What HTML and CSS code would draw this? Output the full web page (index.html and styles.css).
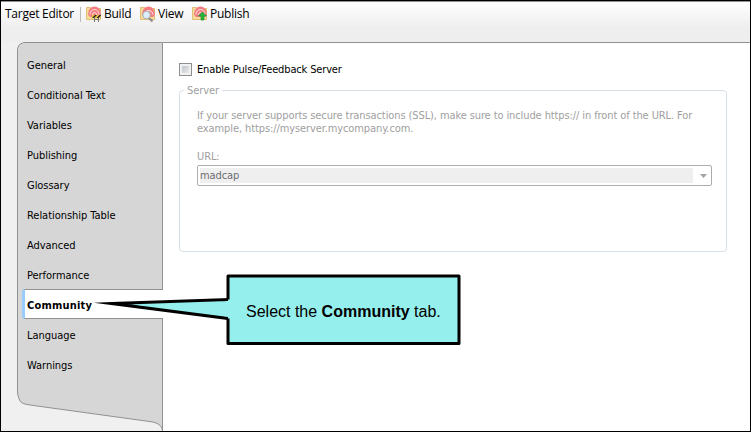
FILE: index.html
```html
<!DOCTYPE html>
<html lang="en">
<head>
<meta charset="utf-8">
<title>Target Editor</title>
<link rel="stylesheet" href="styles.css">
</head>
<body>
<div class="window">
  <header class="toolbar">
    <span class="title">Target Editor</span>
    <span class="divider"></span>
    <button class="tool build"><svg width="16" height="17" viewBox="0 0 16 17"><path d="M.5 1.500h4l1 1h9v11H.5z" fill="#f5dc98" stroke="#e0bd78"/><path d="M2 8.500a6.500 8 0 0 1 13 0L13 11H4z" fill="#f47c80"/><path d="M4 8.500a4.500 5 0 0 1 9 0M6.500 9a2 2.500 0 0 1 4 0" fill="none" stroke="#ffe6e2"/><path d="M6 9h9v3H6z" fill="#e8c23c"/><path d="M6 12l3-3h2l-3 3zM10.500 12l3-3H15v.5L12.500 12z" fill="#222"/><path d="M8.500 12v4M12.500 12v4M8 13.500h5" stroke="#777" fill="none"/></svg><span>Build</span></button>
    <button class="tool view"><svg width="16" height="17" viewBox="0 0 16 17"><path d="M.5 1.500h4l1 1h9v11H.5z" fill="#f5dc98" stroke="#e0bd78"/><path d="M2 8.500a6.500 8 0 0 1 13 0L13 11H4z" fill="#f47c80"/><path d="M5 6a4.500 4 0 0 1 8 2.500" fill="none" stroke="#ffe6e2"/><path d="M9 12l3.500 3.500" stroke="#888" stroke-width="2"/><circle cx="6.500" cy="9" r="3.800" fill="#dcecf8" stroke="#a9adb5"/></svg><span>View</span></button>
    <button class="tool publish"><svg width="16" height="17" viewBox="0 0 16 17"><path d="M.5 1.500h4l1 1h9v11H.5z" fill="#f5dc98" stroke="#e0bd78"/><path d="M2 8.500a6.500 8 0 0 1 13 0L13 11H4z" fill="#f47c80"/><path d="M4 8.500a4.500 5 0 0 1 9 0M6.500 9a2 2.500 0 0 1 4 0" fill="none" stroke="#ffe6e2"/><path d="M10.500 6l4 4H12v4H9v-4H6.500z" fill="#27b53a" stroke="#14862a" stroke-width=".6"/></svg><span>Publish</span></button>
  </header>
  <div class="body">
    <nav class="tabs">
      <svg class="tabs-shape" width="147" height="390" viewBox="0 0 147 390"><path d="M.5 350V6.500L2.500 2.500L6.500.5H145.500V389Q145 382 136 380L13 363Q4 362 2.500 358Q.5 353 .5 350z" fill="#d6d6d6" stroke="#919191"/></svg>
      <a class="tab">General</a>
      <a class="tab">Conditional Text</a>
      <a class="tab">Variables</a>
      <a class="tab">Publishing</a>
      <a class="tab">Glossary</a>
      <a class="tab">Relationship Table</a>
      <a class="tab">Advanced</a>
      <a class="tab">Performance</a>
      <a class="tab active">Community</a>
      <a class="tab">Language</a>
      <a class="tab">Warnings</a>
    </nav>
    <main class="page">
      <label class="enable"><span class="check"></span><span class="enable-text">Enable Pulse/Feedback Server</span></label>
      <fieldset class="group">
        <legend><span>Server</span></legend>
        <p class="hint">If your server supports secure transactions (SSL), make sure to include https:// in front of the URL. For<br>example, https://myserver.mycompany.com.</p>
        <div class="url-label">URL:</div>
        <div class="combo"><div class="value">madcap</div><svg width="7" height="4" viewBox="0 0 7 4"><path d="M0 0h7L3.500 4z" fill="#a3a3a3"/></svg></div>
      </fieldset>
    </main>
  </div>
  <div class="callout">
    <svg width="374" height="74" viewBox="0 0 374 74"><path d="M23 30.500L139 26.500V45.500z" fill="#95efec" stroke="#000" stroke-width="3" stroke-miterlimit="30"/><path d="M139 26.500V3H370V70.500H139V45.500" fill="#95efec" stroke="#000" stroke-width="3" stroke-linejoin="round"/><path d="M136 28.100V43.600L142 44.500V27.900z" fill="#95efec"/></svg>
    <span class="callout-text">Select the <b>Community</b> tab.</span>
  </div>
</div>
</body>
</html>
```
FILE: styles.css
```css
* { box-sizing: border-box; }
body { margin: 0; font: 11px/13px "DejaVu Sans Condensed", "Noto Sans", sans-serif; color: #000; }
.window { position: relative; width: 751px; height: 432px; border: 1px solid #000; background: #f0f0f0; overflow: hidden; display: flex; flex-direction: column; }
.toolbar { height: 41px; flex: none; display: flex; align-items: flex-start; padding-left: 4px; border-top: 1px solid #919191; background: linear-gradient(#fff, #eee 26px, #eee); font: 12px/16px "Open Sans", sans-serif; white-space: nowrap; }
.toolbar span { margin-top: 4px; }
.title { width: 76px; letter-spacing: -.25px; }
.toolbar .divider { width: 1px; height: 15px; margin: 5px 5px 0 -1px; background: #bbb; }
.tool { display: flex; gap: 2px; border: 0; padding: 0; background: none; font: inherit; color: inherit; letter-spacing: -.25px; }
.tool svg { margin-top: 4px; }
.build { width: 54px; }
.view { width: 52px; }
.body { flex: 1; display: flex; padding-left: 16px; min-height: 0; }
.tabs { position: relative; width: 146px; flex: none; padding-top: 8px; letter-spacing: -.04px; }
.tabs-shape { position: absolute; left: 0; top: 0; }
.tab { position: relative; display: flex; align-items: center; height: 30px; padding-left: 10px; white-space: nowrap; }
.active { margin: -1px 0 1px 5px; padding: 2px 0 0 2px; border: solid #919191; border-width: 1px 0; border-left: 3px solid #99ccff; border-radius: 3px 0 0 3px; background: #fff; font-weight: bold; letter-spacing: .2px; }
.page { flex: 1; background: #fff; border-top: 1px solid #919191; padding: 19px 24px 0 16px; }
.enable { display: flex; gap: 5px; height: 14px; align-items: center; white-space: nowrap; letter-spacing: -.15px; }
.check { width: 13px; height: 13px; border: 1px solid #8e8f8f; background: linear-gradient(135deg, #b4bac4, #f4f4f4); background-clip: padding-box; box-shadow: inset 0 0 0 2px #f1f1f1; }
.group { height: 168px; margin: 8px 0 0; padding: 12px 14px 0 17px; border: 1px solid #d5dfe5; border-radius: 4px; color: #a0a0a0; white-space: nowrap; letter-spacing: -.1px; }
.group legend { margin-left: -13px; padding: 0 3px; }
.hint { margin: 0; }
.url-label { margin-top: 15px; }
.combo { display: flex; align-items: center; justify-content: space-between; margin-top: 2px; height: 21px; width: 515px; border: 1px solid #adadad; border-radius: 2px; padding: 0 4px 0 2px; color: #6d6d6d; }
.value { width: 493px; height: 15px; background: #efefef; line-height: 15px; }
.callout { position: absolute; left: 88px; top: 272px; }
.callout svg { display: block; }
.callout-text { position: absolute; left: 157px; top: 29px; font: 16px/20px "Liberation Sans", Arial, sans-serif; white-space: nowrap; }
```
